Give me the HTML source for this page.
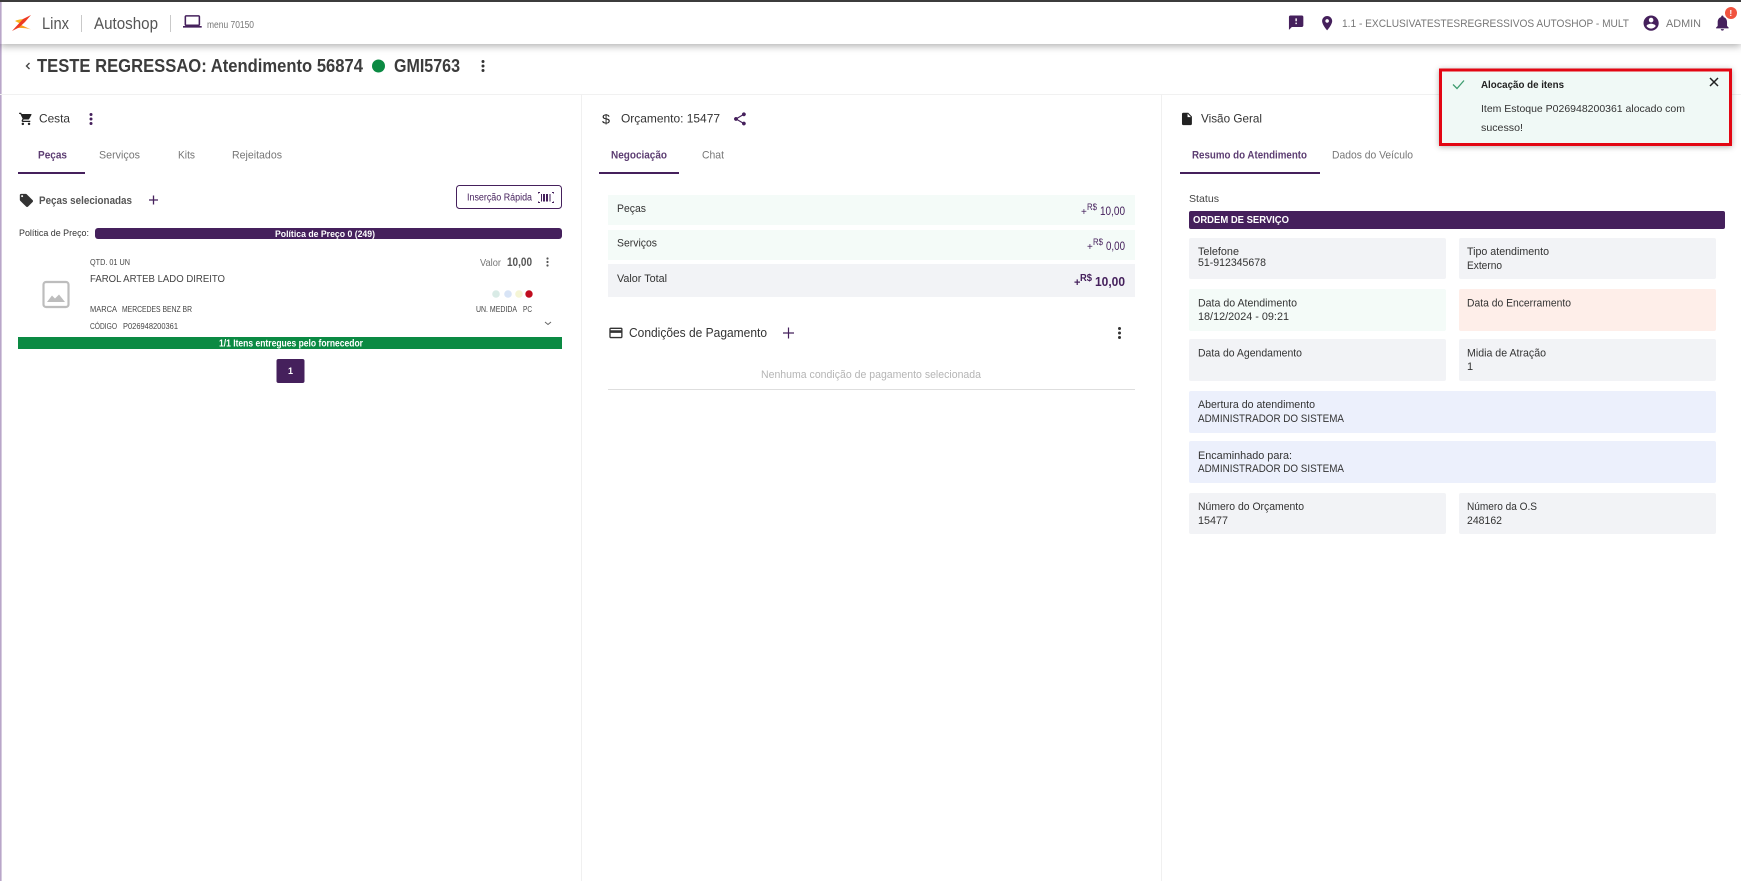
<!DOCTYPE html>
<html lang="pt-BR">
<head>
<meta charset="utf-8">
<title>Autoshop</title>
<style>
html,body{margin:0;padding:0;background:#fff;width:1741px;height:881px;overflow:hidden}
svg{display:block}
text{font-family:"Liberation Sans",sans-serif;fill:#333}
.g{fill:#777}
.p{fill:#45205c}
.w{fill:#fff;font-weight:bold}
.m{font-weight:bold}
</style>
</head>
<body>
<svg width="1741" height="881" viewBox="0 0 1741 881" xmlns="http://www.w3.org/2000/svg">
<rect width="1741" height="881" fill="#fff"/>
<rect x="0" y="0" width="1.6" height="881" fill="#b9a6c9"/>

<!-- page header -->
<rect x="0" y="94" width="1741" height="1" fill="#f1f1f1"/>
<rect x="581" y="94" width="1" height="787" fill="#f0f0f0"/>
<rect x="1161" y="94" width="1" height="787" fill="#f0f0f0"/>

<!-- top bar -->
<rect x="0" y="0" width="1741" height="44" fill="#fff" style="filter:drop-shadow(0 2px 4px rgba(0,0,0,.32))"/>
<rect x="0" y="0" width="1741" height="2" fill="#3c3c3c"/>
<rect x="0" y="2" width="1.6" height="42" fill="#b9a6c9"/>
<path d="M15 21 Q19 19 26 19 L21 24 Z" fill="#f9b41c"/>
<path d="M19 24 L31 29.500 Q25 27.500 15 28 Z" fill="#f8a01e"/>
<path d="M31 15 L23 19 L12 31 L19 27.500 L25 22 Z" fill="#ee3a24"/>
<text x="42" y="29" font-size="17" textLength="27" lengthAdjust="spacingAndGlyphs" style="fill:#555">Linx</text>
<rect x="81" y="15" width="1" height="17" fill="#c9c9c9"/>
<text x="94" y="29" font-size="17" textLength="64" lengthAdjust="spacingAndGlyphs" style="fill:#555">Autoshop</text>
<rect x="170" y="15" width="1" height="17" fill="#c9c9c9"/>
<path transform="translate(183,12) scale(.78)" fill="#45205c" d="M20 18c1.100 0 1.990-.9 1.990-2L22 6c0-1.100-.9-2-2-2H4c-1.100 0-2 .9-2 2v10c0 1.100.9 2 2 2H0v2h24v-2h-4zM4 6h16v10H4V6z"/>
<text x="207" y="28" font-size="10" textLength="47" lengthAdjust="spacingAndGlyphs" class="g">menu 70150</text>

<path transform="translate(1287.500,14) scale(.72)" fill="#45205c" d="M20 2H4c-1.100 0-1.990.9-1.990 2L2 22l4-4h14c1.100 0 2-.9 2-2V4c0-1.100-.9-2-2-2zm-7 12h-2v-2h2v2zm0-4h-2V6h2v4z"/>
<path transform="translate(1318.500,14.500) scale(.72)" fill="#45205c" d="M12 2C8.130 2 5 5.130 5 9c0 5.250 7 13 7 13s7-7.750 7-13c0-3.870-3.130-7-7-7zm0 9.500c-1.380 0-2.500-1.120-2.500-2.500s1.120-2.500 2.500-2.500 2.500 1.120 2.500 2.500-1.120 2.500-2.500 2.500z"/>
<text x="1342" y="27" font-size="11" textLength="287" lengthAdjust="spacingAndGlyphs" class="g">1.1 - EXCLUSIVATESTESREGRESSIVOS AUTOSHOP - MULT</text>
<path transform="translate(1642,14) scale(.76)" fill="#45205c" d="M12 2C6.480 2 2 6.480 2 12s4.480 10 10 10 10-4.480 10-10S17.520 2 12 2zm0 3c1.660 0 3 1.340 3 3s-1.340 3-3 3-3-1.340-3-3 1.340-3 3-3zm0 14.200c-2.500 0-4.710-1.280-6-3.220.03-1.990 4-3.080 6-3.080 1.990 0 5.970 1.090 6 3.080-1.290 1.940-3.500 3.220-6 3.220z"/>
<text x="1666" y="27" font-size="11" textLength="35" lengthAdjust="spacingAndGlyphs" class="g">ADMIN</text>
<path transform="translate(1713,13.500) scale(.78)" fill="#45205c" d="M12 22c1.100 0 2-.9 2-2h-4c0 1.100.89 2 2 2zm6-6v-5c0-3.070-1.640-5.640-4.500-6.320V4c0-.83-.67-1.500-1.500-1.500s-1.500.67-1.500 1.500v.68C7.630 5.360 6 7.920 6 11v5l-2 2v1h16v-1l-2-2z"/>
<circle cx="1731" cy="13" r="6" fill="#f0533f"/>
<text x="1729.400" y="16" font-size="8.500" class="w" style="fill:#fff">!</text>

<!-- title -->
<path d="M29.500 63 L26.500 66 L29.500 69" fill="none" stroke="#444" stroke-width="1.400"/>
<text x="37" y="72" font-size="18" textLength="326" lengthAdjust="spacingAndGlyphs" class="m" style="fill:#3c3c3c">TESTE REGRESSAO: Atendimento 56874</text>
<circle cx="378.500" cy="66" r="6.500" fill="#0b8a43"/>
<text x="394" y="72" font-size="18" textLength="66" lengthAdjust="spacingAndGlyphs" class="m" style="fill:#3c3c3c">GMI5763</text>
<g fill="#333"><circle cx="483" cy="61.500" r="1.500"/><circle cx="483" cy="66" r="1.500"/><circle cx="483" cy="70.500" r="1.500"/></g>

<!-- Cesta column -->
<path transform="translate(18.500,111.500) scale(.62)" fill="#222" d="M7 18c-1.100 0-1.990.9-1.990 2S5.900 22 7 22s2-.9 2-2-.9-2-2-2zM1 2v2h2l3.600 7.590-1.350 2.450c-.16.28-.25.61-.25.96 0 1.100.9 2 2 2h12v-2H7.420c-.14 0-.25-.11-.25-.25l.03-.12.9-1.630h7.450c.75 0 1.410-.41 1.750-1.030l3.580-6.490c.08-.14.12-.31.12-.48 0-.55-.45-1-1-1H5.210l-.94-2H1zm16 16c-1.100 0-1.990.9-1.990 2s.89 2 1.990 2 2-.9 2-2-.9-2-2-2z"/>
<text x="39" y="122.500" font-size="12" textLength="31" lengthAdjust="spacingAndGlyphs">Cesta</text>
<g fill="#45205c"><circle cx="91" cy="114.500" r="1.500"/><circle cx="91" cy="119" r="1.500"/><circle cx="91" cy="123.500" r="1.500"/></g>
<text x="38" y="158.500" font-size="11" textLength="29" lengthAdjust="spacingAndGlyphs" class="m" style="fill:#5c3d72">Peças</text>
<text x="99" y="158.500" font-size="11" textLength="41" lengthAdjust="spacingAndGlyphs" class="g">Serviços</text>
<text x="178" y="158.500" font-size="11" textLength="17" lengthAdjust="spacingAndGlyphs" class="g">Kits</text>
<text x="232" y="158.500" font-size="11" textLength="50" lengthAdjust="spacingAndGlyphs" class="g">Rejeitados</text>
<rect x="18" y="172" width="67" height="2" fill="#45205c"/>
<path transform="translate(18.500,192.500) scale(.66)" fill="#333" d="M21.410 11.580l-9-9C12.050 2.220 11.550 2 11 2H4c-1.100 0-2 .9-2 2v7c0 .55.22 1.050.59 1.420l9 9c.36.36.86.58 1.410.58.55 0 1.050-.22 1.410-.59l7-7c.37-.36.59-.86.59-1.410 0-.55-.23-1.060-.59-1.420zM5.500 7C4.670 7 4 6.330 4 5.500S4.670 4 5.500 4 7 4.670 7 5.500 6.330 7 5.500 7z"/>
<text x="39" y="204" font-size="11" textLength="93" lengthAdjust="spacingAndGlyphs" class="m" style="fill:#555">Peças selecionadas</text>
<path d="M149 200 H158 M153.500 195.500 V204.500" stroke="#45205c" stroke-width="1.300" fill="none"/>
<rect x="456.500" y="185.500" width="105" height="23" rx="3" fill="#fff" stroke="#45205c"/>
<text x="467" y="200.500" font-size="10" textLength="65" lengthAdjust="spacingAndGlyphs" style="fill:#45205c">Inserção Rápida</text>
<g fill="none" stroke="#45205c" stroke-width="1"><path d="M540 192.500 h-1.500 v1 M552 192.500 h1.500 v1 M540 202.500 h-1.500 v-1 M552 202.500 h1.500 v-1"/></g>
<g fill="#45205c"><rect x="541" y="194" width="1" height="7.500"/><rect x="543" y="194" width="2" height="7.500"/><rect x="546" y="194" width="2" height="7.500"/><rect x="549.500" y="194" width="1" height="7.500"/></g>

<text x="19" y="236" font-size="9.500" textLength="70" lengthAdjust="spacingAndGlyphs">Política de Preço:</text>
<rect x="95" y="228" width="467" height="11" rx="3" fill="#45205c"/>
<text x="275" y="237" font-size="9.500" textLength="100" lengthAdjust="spacingAndGlyphs" style="fill:#fff;font-weight:bold">Política de Preço 0 (249)</text>

<!-- item -->
<text x="90" y="265" font-size="8" textLength="40" lengthAdjust="spacingAndGlyphs" style="fill:#444">QTD. 01 UN</text>
<text x="90" y="282" font-size="10.500" textLength="135" lengthAdjust="spacingAndGlyphs" style="fill:#444">FAROL ARTEB LADO DIREITO</text>
<text x="480" y="266" font-size="10" textLength="21" lengthAdjust="spacingAndGlyphs" class="g">Valor</text>
<text x="507" y="266" font-size="11.500" textLength="25" lengthAdjust="spacingAndGlyphs" class="m" style="fill:#555">10,00</text>
<g fill="#555"><circle cx="547.500" cy="258.500" r="1.100"/><circle cx="547.500" cy="262" r="1.100"/><circle cx="547.500" cy="265.500" r="1.100"/></g>
<rect x="43.500" y="282" width="25" height="25" rx="2.500" fill="#fff" stroke="#bdbdbd" stroke-width="2.200"/>
<path d="M47 302 L52 295.500 L55 298.500 L59 294.500 L65 302 Z" fill="#bdbdbd"/>
<circle cx="496" cy="294" r="3.800" fill="#d9ebe6"/>
<circle cx="508" cy="294" r="3.800" fill="#d8e4f6"/>
<circle cx="519" cy="294" r="3.800" fill="#f5f5d5"/>
<circle cx="529" cy="294" r="3.700" fill="#c00d1e"/>
<text x="90" y="312" font-size="8" textLength="27" lengthAdjust="spacingAndGlyphs" style="fill:#444">MARCA</text>
<text x="122" y="312" font-size="8" textLength="70" lengthAdjust="spacingAndGlyphs" style="fill:#444">MERCEDES BENZ BR</text>
<text x="476" y="312" font-size="8" textLength="41" lengthAdjust="spacingAndGlyphs" style="fill:#444">UN. MEDIDA</text>
<text x="523" y="312" font-size="8" textLength="9" lengthAdjust="spacingAndGlyphs" style="fill:#444">PC</text>
<text x="90" y="329" font-size="8" textLength="27" lengthAdjust="spacingAndGlyphs" style="fill:#444">CÓDIGO</text>
<text x="123" y="329" font-size="8" textLength="55" lengthAdjust="spacingAndGlyphs" style="fill:#444">P026948200361</text>
<path d="M545 322 L548 324.500 L551 322" fill="none" stroke="#666" stroke-width="1"/>
<rect x="18" y="337" width="544" height="12" fill="#0b8a43"/>
<text x="219" y="346.500" font-size="10" textLength="144" lengthAdjust="spacingAndGlyphs" style="fill:#fff;font-weight:bold">1/1 Itens entregues pelo fornecedor</text>
<rect x="276.500" y="359" width="28" height="24" rx="2" fill="#45205c"/>
<text x="288" y="374" font-size="9" style="fill:#fff;font-weight:bold">1</text>

<!-- Orçamento column -->
<text x="602" y="123.500" font-size="13" textLength="8" lengthAdjust="spacingAndGlyphs" style="fill:#222">$</text>
<text x="621" y="122.500" font-size="12" textLength="99" lengthAdjust="spacingAndGlyphs">Orçamento: 15477</text>
<path transform="translate(732,111) scale(.66)" fill="#45205c" d="M18 16.080c-.76 0-1.440.3-1.960.77L8.910 12.700c.05-.23.09-.46.09-.7s-.04-.47-.09-.7l7.050-4.110c.54.5 1.250.81 2.040.81 1.660 0 3-1.340 3-3s-1.340-3-3-3-3 1.340-3 3c0 .24.04.47.09.7L8.040 9.810C7.500 9.310 6.790 9 6 9c-1.660 0-3 1.340-3 3s1.340 3 3 3c.79 0 1.500-.31 2.040-.81l7.120 4.160c-.05.21-.08.43-.08.65 0 1.610 1.310 2.920 2.920 2.920 1.610 0 2.920-1.310 2.920-2.920s-1.310-2.920-2.920-2.920z"/>
<text x="611" y="158.500" font-size="11" textLength="56" lengthAdjust="spacingAndGlyphs" class="m" style="fill:#5c3d72">Negociação</text>
<text x="702" y="158.500" font-size="11" textLength="22" lengthAdjust="spacingAndGlyphs" class="g">Chat</text>
<rect x="599" y="172" width="80" height="2" fill="#45205c"/>

<rect x="608" y="195" width="527" height="30" fill="#f4fbf8"/>
<rect x="608" y="230" width="527" height="30" fill="#f4fbf8"/>
<rect x="608" y="264" width="527" height="33" fill="#f2f3f6"/>
<text x="617" y="212" font-size="11" textLength="29" lengthAdjust="spacingAndGlyphs">Peças</text>
<text x="617" y="246.500" font-size="11" textLength="40" lengthAdjust="spacingAndGlyphs">Serviços</text>
<text x="617" y="282" font-size="11" textLength="50" lengthAdjust="spacingAndGlyphs">Valor Total</text>
<text x="1081" y="215" font-size="10" style="fill:#45205c">+</text>
<text x="1087" y="210" font-size="9" textLength="10" lengthAdjust="spacingAndGlyphs" style="fill:#45205c">R$</text>
<text x="1100" y="215" font-size="11.500" textLength="25" lengthAdjust="spacingAndGlyphs" style="fill:#45205c">10,00</text>
<text x="1087" y="250" font-size="10" style="fill:#45205c">+</text>
<text x="1093" y="245" font-size="9" textLength="10" lengthAdjust="spacingAndGlyphs" style="fill:#45205c">R$</text>
<text x="1106" y="250" font-size="11.500" textLength="19" lengthAdjust="spacingAndGlyphs" style="fill:#45205c">0,00</text>
<text x="1074" y="286" font-size="11" class="m" style="fill:#45205c">+</text>
<text x="1080" y="281" font-size="10" textLength="12" lengthAdjust="spacingAndGlyphs" class="m" style="fill:#45205c">R$</text>
<text x="1095" y="286" font-size="13" textLength="30" lengthAdjust="spacingAndGlyphs" class="m" style="fill:#45205c">10,00</text>

<path transform="translate(608,325) scale(.66)" fill="#333" d="M20 4H4c-1.110 0-1.990.89-1.990 2L2 18c0 1.110.89 2 2 2h16c1.110 0 2-.89 2-2V6c0-1.110-.89-2-2-2zm0 14H4v-6h16v6zm0-10H4V6h16v2z"/>
<text x="629" y="337" font-size="12.500" textLength="138" lengthAdjust="spacingAndGlyphs" style="fill:#333">Condições de Pagamento</text>
<path d="M783 333 H794 M788.500 327.500 V338.500" stroke="#45205c" stroke-width="1.200" fill="none"/>
<g fill="#333"><circle cx="1119.500" cy="328.500" r="1.500"/><circle cx="1119.500" cy="333" r="1.500"/><circle cx="1119.500" cy="337.500" r="1.500"/></g>
<text x="761" y="378" font-size="11" textLength="220" lengthAdjust="spacingAndGlyphs" style="fill:#b5b5b5">Nenhuma condição de pagamento selecionada</text>
<rect x="608" y="389" width="527" height="1" fill="#dedede"/>

<!-- Visão Geral column -->
<path transform="translate(1179.500,111.500) scale(.62)" fill="#222" d="M6 2c-1.100 0-1.990.9-1.990 2L4 20c0 1.100.89 2 1.990 2H18c1.100 0 2-.9 2-2V8l-6-6H6zm7 7V3.500L18.500 9H13z"/>
<text x="1201" y="122.500" font-size="12" textLength="61" lengthAdjust="spacingAndGlyphs">Visão Geral</text>
<text x="1192" y="158.500" font-size="11" textLength="115" lengthAdjust="spacingAndGlyphs" class="m" style="fill:#5c3d72">Resumo do Atendimento</text>
<text x="1332" y="158.500" font-size="11" textLength="81" lengthAdjust="spacingAndGlyphs" class="g">Dados do Veículo</text>
<rect x="1180" y="172" width="140" height="2" fill="#45205c"/>
<text x="1189" y="202" font-size="10.500" textLength="30" lengthAdjust="spacingAndGlyphs" style="fill:#444">Status</text>
<rect x="1189" y="211" width="536" height="18" rx="2" fill="#45205c"/>
<text x="1193" y="223" font-size="10" textLength="96" lengthAdjust="spacingAndGlyphs" style="fill:#fff;font-weight:bold">ORDEM DE SERVIÇO</text>

<rect x="1189" y="238" width="257" height="41" rx="2" fill="#f2f3f6"/>
<rect x="1459" y="238" width="257" height="41" rx="2" fill="#f2f3f6"/>
<rect x="1189" y="289" width="257" height="42" rx="2" fill="#f4fbf8"/>
<rect x="1459" y="289" width="257" height="42" rx="2" fill="#feeee9"/>
<rect x="1189" y="339" width="257" height="42" rx="2" fill="#f2f3f6"/>
<rect x="1459" y="339" width="257" height="42" rx="2" fill="#f2f3f6"/>
<rect x="1189" y="391" width="527" height="42" rx="2" fill="#ecf0fc"/>
<rect x="1189" y="441" width="527" height="42" rx="2" fill="#ecf0fc"/>
<rect x="1189" y="493" width="257" height="41" rx="2" fill="#f2f3f6"/>
<rect x="1459" y="493" width="257" height="41" rx="2" fill="#f2f3f6"/>

<text x="1198" y="255" font-size="11" textLength="41" lengthAdjust="spacingAndGlyphs">Telefone</text>
<text x="1198" y="266" font-size="11" textLength="68" lengthAdjust="spacingAndGlyphs">51-912345678</text>
<text x="1467" y="255" font-size="11" textLength="82" lengthAdjust="spacingAndGlyphs">Tipo atendimento</text>
<text x="1467" y="269" font-size="11" textLength="35" lengthAdjust="spacingAndGlyphs">Externo</text>
<text x="1198" y="306.500" font-size="11" textLength="99" lengthAdjust="spacingAndGlyphs">Data do Atendimento</text>
<text x="1198" y="320" font-size="11" textLength="91" lengthAdjust="spacingAndGlyphs">18/12/2024 - 09:21</text>
<text x="1467" y="306.500" font-size="11" textLength="104" lengthAdjust="spacingAndGlyphs">Data do Encerramento</text>
<text x="1198" y="356.500" font-size="11" textLength="104" lengthAdjust="spacingAndGlyphs">Data do Agendamento</text>
<text x="1467" y="356.500" font-size="11" textLength="79" lengthAdjust="spacingAndGlyphs">Midia de Atração</text>
<text x="1467" y="370" font-size="11">1</text>
<text x="1198" y="408" font-size="11" textLength="117" lengthAdjust="spacingAndGlyphs">Abertura do atendimento</text>
<text x="1198" y="422" font-size="11" textLength="146" lengthAdjust="spacingAndGlyphs">ADMINISTRADOR DO SISTEMA</text>
<text x="1198" y="459" font-size="11" textLength="94" lengthAdjust="spacingAndGlyphs">Encaminhado para:</text>
<text x="1198" y="472" font-size="11" textLength="146" lengthAdjust="spacingAndGlyphs">ADMINISTRADOR DO SISTEMA</text>
<text x="1198" y="510" font-size="11" textLength="106" lengthAdjust="spacingAndGlyphs">Número do Orçamento</text>
<text x="1198" y="524" font-size="11" textLength="30" lengthAdjust="spacingAndGlyphs">15477</text>
<text x="1467" y="510" font-size="11" textLength="70" lengthAdjust="spacingAndGlyphs">Número da O.S</text>
<text x="1467" y="524" font-size="11" textLength="35" lengthAdjust="spacingAndGlyphs">248162</text>

<!-- toast -->
<rect x="1440.500" y="70" width="290" height="74.500" fill="#f0f9f6" stroke="#e30613" stroke-width="3" style="filter:drop-shadow(0 1px 3px rgba(0,0,0,.3))"/>
<path d="M1453 84.500 L1457 88.500 L1464 80.500" fill="none" stroke="#3f9d70" stroke-width="1.300"/>
<text x="1481" y="88" font-size="10.500" textLength="83" lengthAdjust="spacingAndGlyphs" class="m" style="fill:#222">Alocação de itens</text>
<path d="M1710 78 L1718 86 M1718 78 L1710 86" stroke="#222" stroke-width="1.500" fill="none"/>
<text x="1481" y="112" font-size="10.500" textLength="204" lengthAdjust="spacingAndGlyphs">Item Estoque P026948200361 alocado com</text>
<text x="1481" y="131" font-size="10.500" textLength="42" lengthAdjust="spacingAndGlyphs">sucesso!</text>
</svg>
</body>
</html>
